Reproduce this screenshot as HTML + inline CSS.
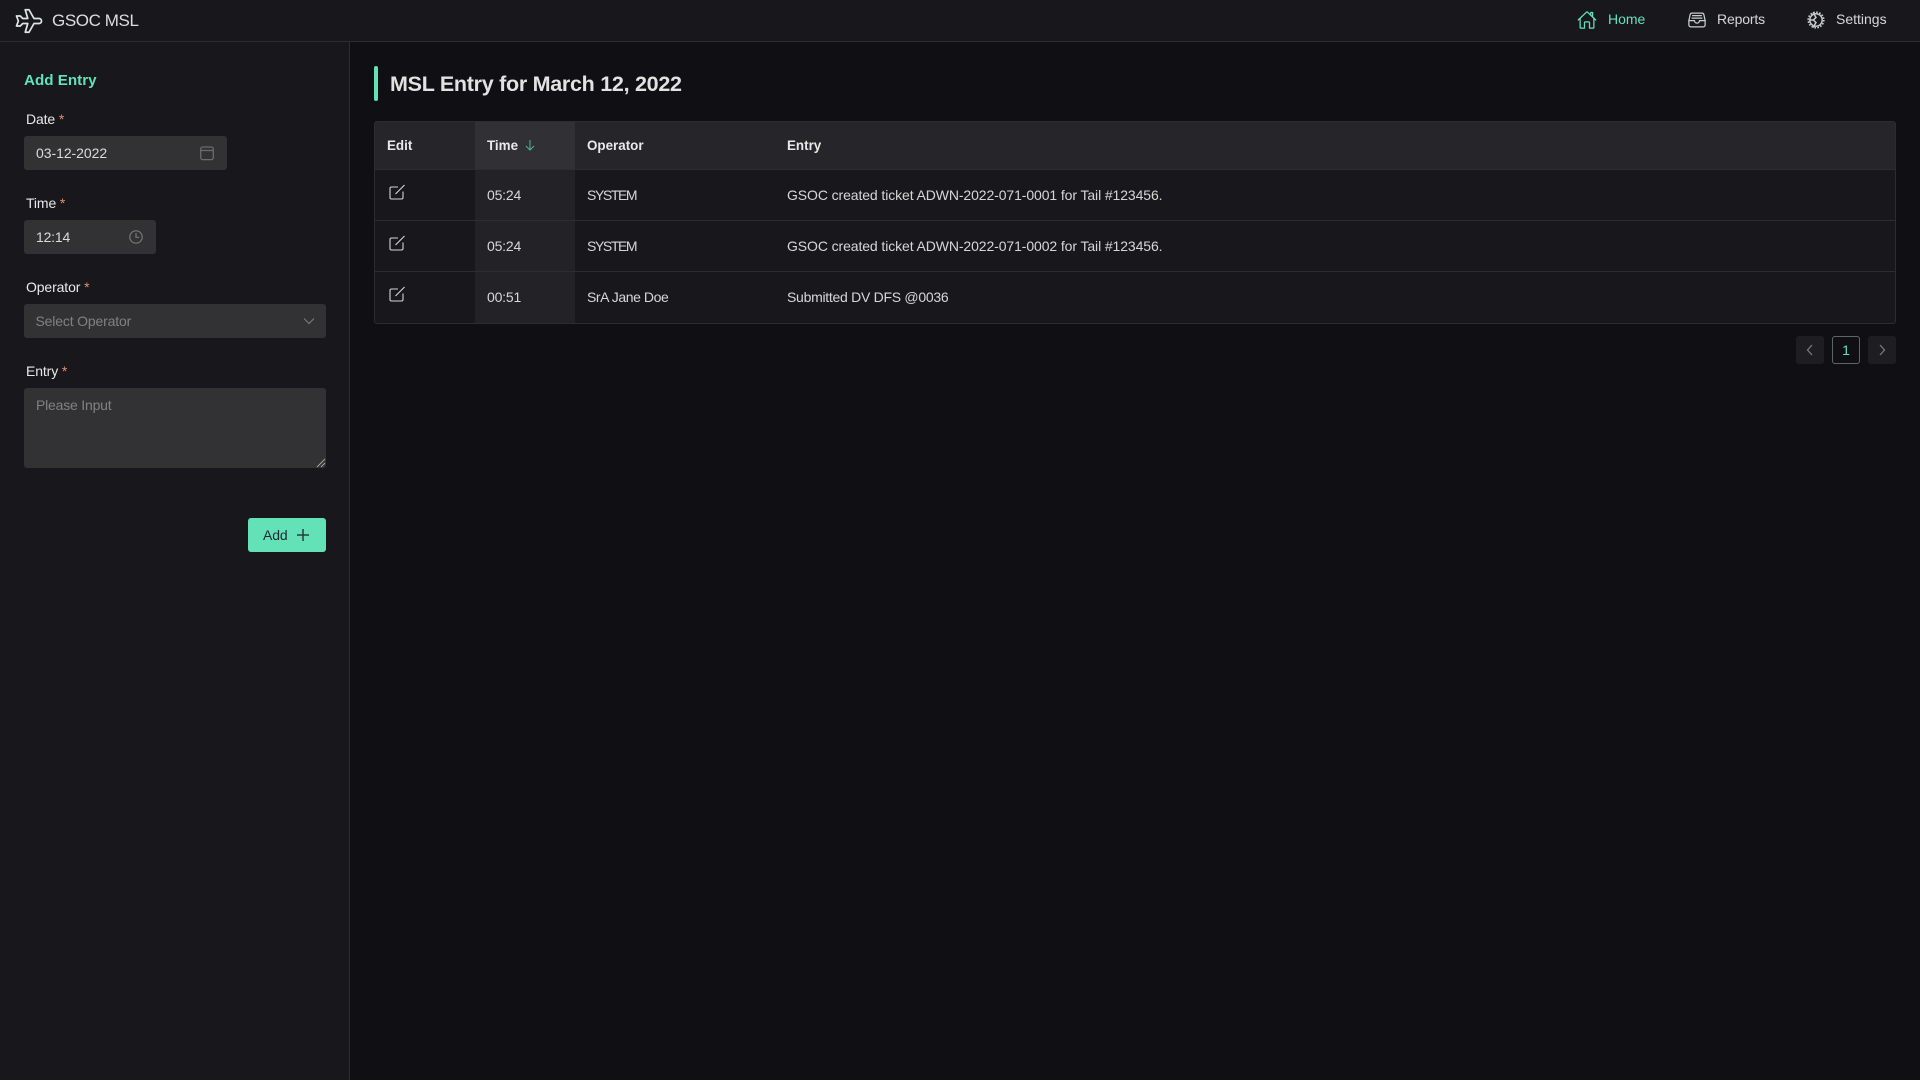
<!DOCTYPE html>
<html lang="en"><head><meta charset="utf-8"><title>GSOC MSL</title>
<style>
*{box-sizing:border-box}
html,body{margin:0;padding:0;width:1920px;height:1080px;overflow:hidden;background:#101014;font-family:"Liberation Sans",sans-serif;font-size:14px;color:rgba(255,255,255,.82)}
.a{position:absolute}
.t{position:absolute;white-space:nowrap;line-height:20px}
svg{position:absolute;fill:none}
.inp{position:absolute;background:#323235;border-radius:3px}
.req{color:#e0906a}
.lbl{color:rgba(255,255,255,.9);left:26px;letter-spacing:-.12px}
.th{font-weight:700;color:rgba(255,255,255,.9);top:136px;font-size:13.4px}
.td{color:rgba(255,255,255,.82);letter-spacing:-.2px}
.line{position:absolute;left:375px;width:1520px;height:1px;background:#2d2d30}
.pg{position:absolute;top:336px;width:28px;height:28px;border-radius:3px;background:#1e1e22}
</style></head>
<body>
<div class="a" style="left:0;top:0;width:1920px;height:42px;background:#18181c;border-bottom:1px solid #2d2d30"></div>
<div class="a" style="left:0;top:42px;width:350px;height:1038px;background:#18181c;border-right:1px solid #2d2d30"></div>

<svg style="left:14px;top:6px" width="30" height="30" viewBox="0 0 24 24" stroke="#dfe3e3" stroke-width="1.400" stroke-linejoin="round"><path d="M16 10h4a2 2 0 0 1 0 4h-4l-4 7h-3l2-7h-4l-2 2h-3l1.500-4-1.500-4h3l2 2h4l-2-7h3z"/></svg>
<span class="t" style="left:52px;top:11px;font-size:17px;letter-spacing:-.4px;color:rgba(255,255,255,.85)">GSOC MSL</span>

<svg style="left:1577px;top:10px" width="20" height="20" viewBox="0 0 512 512" stroke="#63e2b7" stroke-width="32" stroke-linecap="round" stroke-linejoin="round"><path d="M80 212v236a16 16 0 0 0 16 16h96V328a24 24 0 0 1 24-24h80a24 24 0 0 1 24 24v136h96a16 16 0 0 0 16-16V212"/><path d="M480 256L266.890 52c-5-5.280-16.690-5.340-21.780 0L32 256"/><path d="M400 179V64h-48v69"/></svg>
<span class="t" style="left:1608px;top:9px;color:#63e2b7">Home</span>
<svg style="left:1687px;top:10px" width="20" height="20" viewBox="0 0 512 512" stroke="#c9cdcd" stroke-width="32" stroke-linecap="round" stroke-linejoin="round"><path d="M384 80H128c-26 0-43 14-48 40L48 272v112a48.140 48.140 0 0 0 48 48h320a48.140 48.140 0 0 0 48-48V272l-32-152c-5-27-23-40-48-40z"/><path d="M48 272h144M320 272h144M192 272a64 64 0 0 0 128 0M144 144h224M128 208h256"/></svg>
<span class="t" style="left:1717px;top:9px;letter-spacing:-.15px;color:rgba(255,255,255,.82)">Reports</span>
<svg style="left:1806px;top:10px" width="20" height="20" viewBox="0 0 20 20" stroke="#c9cdcd" stroke-width="1.500"><circle cx="10" cy="10" r="6.200"/><circle cx="10" cy="10" r="7.800" stroke-width="1.600" stroke-dasharray="1.600 1.460"/><path d="M3.800 10h3.500l2.700-2.500-3-5M7.300 10l2.700 2.500-3 5"/></svg>
<span class="t" style="left:1836px;top:9px;color:rgba(255,255,255,.82)">Settings</span>

<span class="t" style="left:24px;top:71px;font-size:15.2px;font-weight:700;color:#63e2b7">Add Entry</span>

<span class="t lbl" style="top:109px">Date <span class="req">*</span></span>
<div class="inp" style="left:24px;top:136px;width:203px;height:34px"></div>
<span class="t" style="left:36px;top:143px;letter-spacing:-.05px;color:rgba(255,255,255,.82)">03-12-2022</span>
<svg style="left:199px;top:145px" width="16" height="16" viewBox="0 0 16 16" stroke="#6b6b6e" stroke-width="1.300"><rect x="1.700" y="2" width="12.600" height="12.600" rx="2"/><path d="M1.700 5.500h12.600"/></svg>

<span class="t lbl" style="top:193px">Time <span class="req">*</span></span>
<div class="inp" style="left:24px;top:220px;width:132px;height:34px"></div>
<span class="t" style="left:36px;top:227px;letter-spacing:-.2px;color:rgba(255,255,255,.82)">12:14</span>
<svg style="left:128px;top:229px" width="16" height="16" viewBox="0 0 16 16" stroke="#77777a" stroke-width="1.200"><circle cx="8" cy="8" r="6.200"/><path d="M8 4v4.300h3.200"/></svg>

<span class="t lbl" style="top:277px">Operator <span class="req">*</span></span>
<div class="inp" style="left:24px;top:304px;width:302px;height:34px"></div>
<span class="t" style="left:35.500px;top:311px;letter-spacing:-.16px;color:rgba(255,255,255,.38)">Select Operator</span>
<svg style="left:301px;top:313px" width="16" height="16" viewBox="0 0 16 16" stroke="#77777a" stroke-width="1.200"><path d="M3 5.500l5 5 5-5"/></svg>

<span class="t lbl" style="top:361px">Entry <span class="req">*</span></span>
<div class="inp" style="left:24px;top:388px;width:302px;height:80px"></div>
<span class="t" style="left:36px;top:395px;letter-spacing:-.2px;color:rgba(255,255,255,.38)">Please Input</span>
<svg style="left:316px;top:458px" width="10" height="10" viewBox="0 0 10 10" stroke="#a8a8a8" stroke-width=".9"><path d="M1 9l8-8M5 9l4-4"/></svg>

<div class="a" style="left:248px;top:518px;width:78px;height:34px;background:#63e2b7;border-radius:3px"></div>
<span class="t" style="left:263px;top:525px;letter-spacing:-.1px;color:#1c2a35">Add</span>
<svg style="left:295px;top:527px" width="16" height="16" viewBox="0 0 16 16" stroke="#2a3a3c" stroke-width="1.500"><path d="M8 2v12M2 8h12"/></svg>

<div class="a" style="left:374px;top:66px;width:4px;height:35px;background:#63e2b7;border-radius:2px"></div>
<span class="t" style="left:390px;top:72px;font-size:21.500px;line-height:24px;font-weight:700;letter-spacing:-.28px;color:rgba(255,255,255,.88)">MSL Entry for March 12, 2022</span>

<div class="a" style="left:374px;top:121px;width:1522px;height:203px;border:1px solid #2d2d30;border-radius:3px;background:#18181c;overflow:hidden">
<div class="a" style="left:0;top:0;width:1520px;height:48px;background:#26262a"></div>
<div class="a" style="left:100px;top:0;width:100px;height:48px;background:#313135"></div>
<div class="a" style="left:100px;top:48px;width:100px;height:153px;background:#232327"></div>
</div>
<div class="line" style="top:169px"></div>
<div class="line" style="top:220px"></div>
<div class="line" style="top:271px"></div>

<span class="t th" style="left:387px">Edit</span>
<span class="t th" style="left:487px">Time</span>
<svg style="left:523px;top:138px" width="14" height="14" viewBox="0 0 14 14" stroke="#4fb393" stroke-width="1"><path d="M7 2v10M3 8l4 4 4-4"/></svg>
<span class="t th" style="left:587px">Operator</span>
<span class="t th" style="left:787px">Entry</span>

<svg style="left:388px;top:183px" width="18" height="18" viewBox="0 0 18 18" stroke="#d6d6d6" stroke-width="1.100"><path d="M15 8.500v6a1.500 1.500 0 0 1-1.500 1.500h-10A1.500 1.500 0 0 1 2 14.500v-9A1.500 1.500 0 0 1 3.500 4H10M7.500 11L16.500 2"/></svg>
<svg style="left:388px;top:234px" width="18" height="18" viewBox="0 0 18 18" stroke="#d6d6d6" stroke-width="1.100"><path d="M15 8.500v6a1.500 1.500 0 0 1-1.500 1.500h-10A1.500 1.500 0 0 1 2 14.500v-9A1.500 1.500 0 0 1 3.500 4H10M7.500 11L16.500 2"/></svg>
<svg style="left:388px;top:285px" width="18" height="18" viewBox="0 0 18 18" stroke="#d6d6d6" stroke-width="1.100"><path d="M15 8.500v6a1.500 1.500 0 0 1-1.500 1.500h-10A1.500 1.500 0 0 1 2 14.500v-9A1.500 1.500 0 0 1 3.500 4H10M7.500 11L16.500 2"/></svg>

<span class="t td" style="left:487px;top:185px">05:24</span>
<span class="t td" style="left:587px;top:185px;letter-spacing:-1.400px">SYSTEM</span>
<span class="t td" style="left:787px;top:185px;letter-spacing:-.1px">GSOC created ticket ADWN-2022-071-0001 for Tail #123456.</span>
<span class="t td" style="left:487px;top:236px">05:24</span>
<span class="t td" style="left:587px;top:236px;letter-spacing:-1.400px">SYSTEM</span>
<span class="t td" style="left:787px;top:236px;letter-spacing:-.1px">GSOC created ticket ADWN-2022-071-0002 for Tail #123456.</span>
<span class="t td" style="left:487px;top:287px">00:51</span>
<span class="t td" style="left:587px;top:287px;letter-spacing:-.42px">SrA Jane Doe</span>
<span class="t td" style="left:787px;top:287px;letter-spacing:-.28px">Submitted DV DFS @0036</span>

<div class="pg" style="left:1796px"></div>
<svg style="left:1802px;top:342px" width="16" height="16" viewBox="0 0 16 16" stroke="#7a7a7d" stroke-width="1.300"><path d="M10 3L5.500 8l4.500 5"/></svg>
<div class="pg" style="left:1832px;background:transparent;border:1px solid #5e6664"></div>
<span class="t" style="left:1832px;top:340px;width:28px;text-align:center;color:#63e2b7">1</span>
<div class="pg" style="left:1868px"></div>
<svg style="left:1874px;top:342px" width="16" height="16" viewBox="0 0 16 16" stroke="#7a7a7d" stroke-width="1.300"><path d="M6 3l4.500 5L6 13"/></svg>
</body></html>
